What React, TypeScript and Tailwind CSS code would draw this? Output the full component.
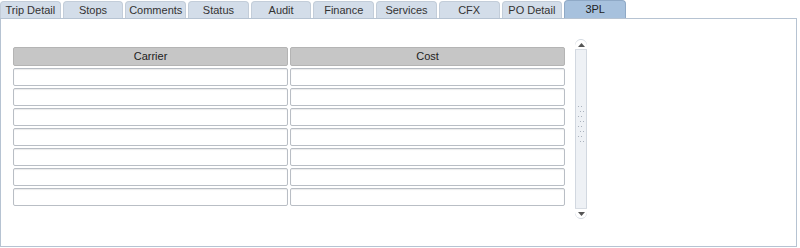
const tabs = ['Trip Detail', 'Stops', 'Comments', 'Status', 'Audit', 'Finance', 'Services', 'CFX', 'PO Detail', '3PL'];

function Cell() {
  return <div className="h-[18px] rounded-[2px] border border-[#b9bec5] bg-white shadow-[inset_0_1px_1px_rgba(0,0,0,0.08)]" />;
}

export default function App() {
  return (
    <div className="w-[800px] h-[248px] bg-white font-['Liberation_Sans',Arial,sans-serif] text-[11px] text-[#333]">
      <div className="flex gap-[2px] h-[18px] items-end">
        {tabs.map((t) => {
          const active = t === '3PL';
          return (
            <div
              key={t}
              className={
                active
                  ? 'w-[62px] h-[18px] flex items-center justify-center rounded-t-[4px] border border-b-0 border-[#8fa9c6] bg-[#a7c1dd] text-[#222]'
                  : 'w-[60.7px] h-[17px] flex items-center justify-center rounded-t-[4px] border border-b-0 border-[#c3cdd9] bg-[#d3dde9] text-[#333]'
              }
            >
              {t}
            </div>
          );
        })}
      </div>
      <div className="w-[797px] h-[229px] border border-[#b6c3d2] bg-white flex gap-[10px] pl-[12px] pt-[20px]">
        <div className="flex flex-col gap-[2px] pt-[8px]">
          <div className="grid grid-cols-[275px_275px] gap-[2px]">
            <div className="h-[19px] flex items-center justify-center bg-[#c6c6c6] border border-[#b4b4b4] rounded-[2px] text-[#222]">Carrier</div>
            <div className="h-[19px] flex items-center justify-center bg-[#c6c6c6] border border-[#b4b4b4] rounded-[2px] text-[#222]">Cost</div>
          </div>
          {Array.from({ length: 7 }).map((_, i) => (
            <div key={i} className="grid grid-cols-[275px_275px] gap-[2px]">
              <Cell />
              <Cell />
            </div>
          ))}
        </div>
        <div className="w-[12px] h-[180px] rounded-[6px] border border-[#d2d8e0] bg-[#eef1f5] flex flex-col items-center">
          <div className="w-[12px] h-[10px] rounded-t-[6px] bg-white border-b border-[#d7dce3] flex items-center justify-center">
            <svg width="7" height="4" viewBox="0 0 7 4"><path d="M3.5 0 L7 4 L0 4 Z" fill="#555" /></svg>
          </div>
          <div className="flex-1 flex flex-col items-center pt-[56px]">
            <div className="flex flex-col gap-[4px] items-center">
              {Array.from({ length: 8 }).map((_, i) => (
                <div key={i} className={i % 2 ? 'flex gap-[2px] pl-[2px]' : 'flex gap-[2px] pr-[2px]'}>
                  <div className="w-[1px] h-[1px] bg-[#aab2bd]" />
                  <div className="w-[1px] h-[1px] bg-[#aab2bd]" />
                </div>
              ))}
            </div>
          </div>
          <div className="w-[12px] h-[10px] rounded-b-[6px] bg-white border-t border-[#d7dce3] flex items-center justify-center">
            <svg width="7" height="4" viewBox="0 0 7 4"><path d="M0 0 L7 0 L3.5 4 Z" fill="#555" /></svg>
          </div>
        </div>
      </div>
    </div>
  );
}
